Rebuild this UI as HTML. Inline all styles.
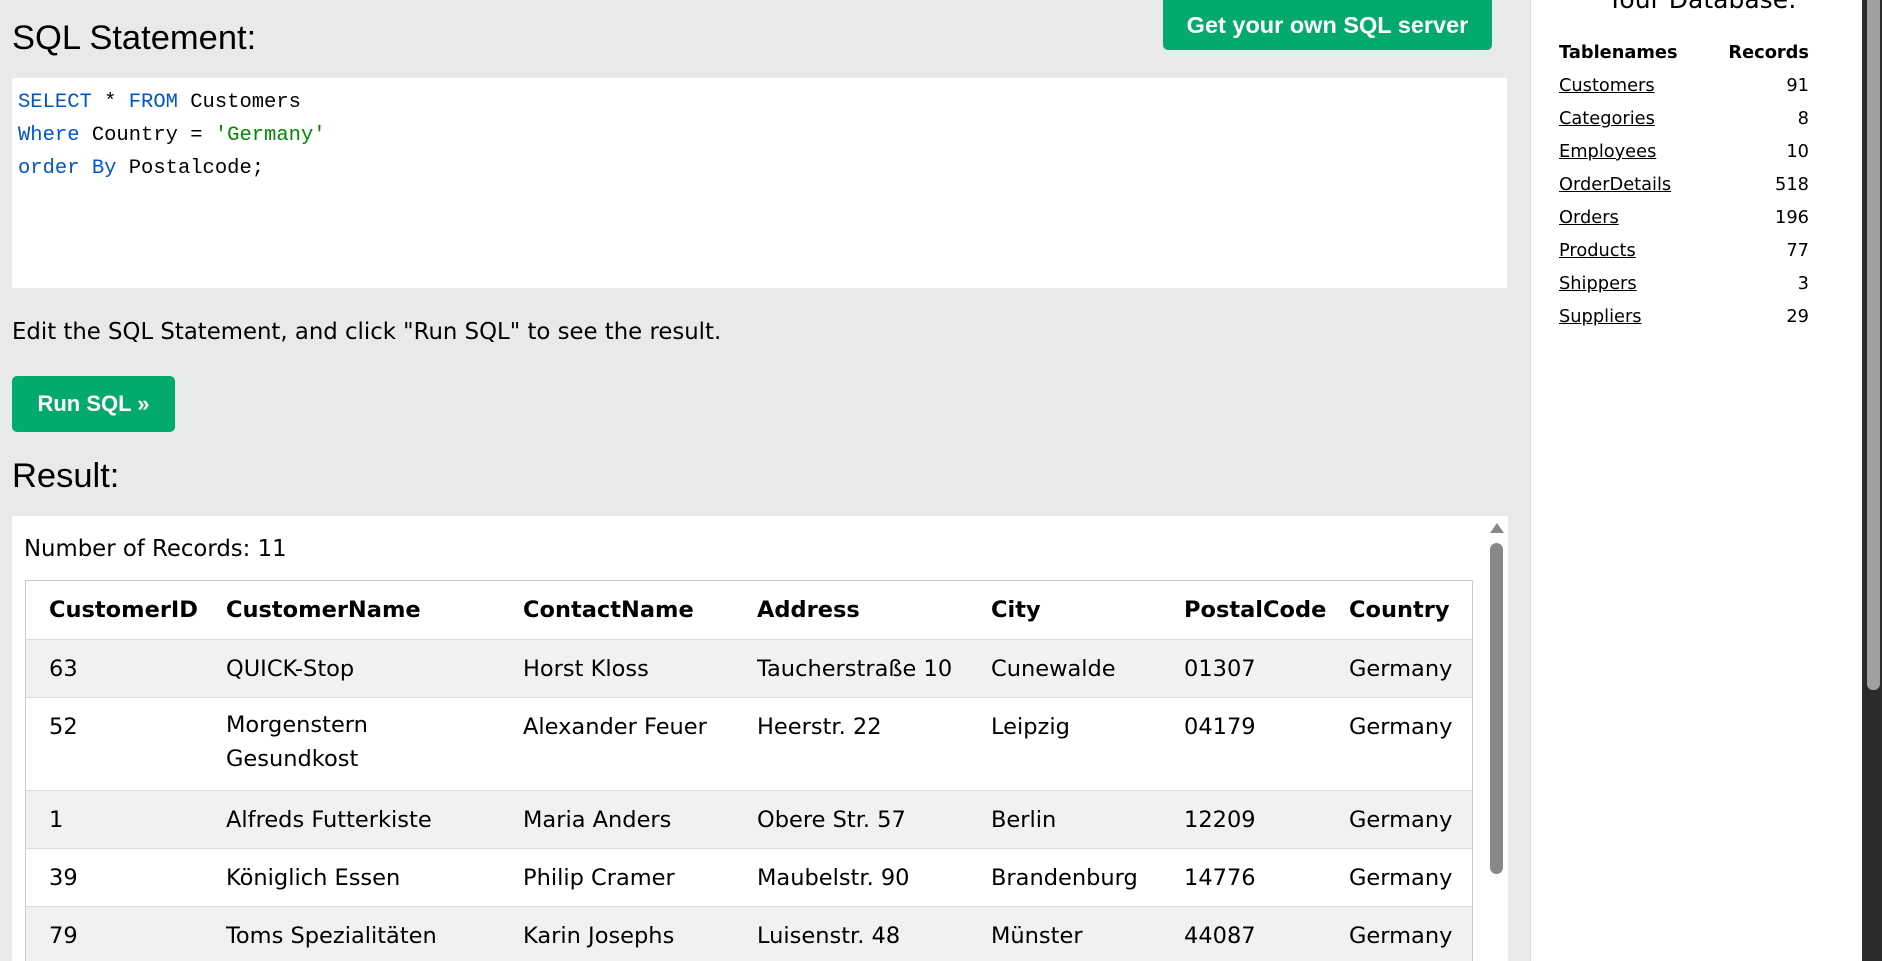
<!DOCTYPE html>
<html><head><meta charset="utf-8"><style>
*{margin:0;padding:0;box-sizing:border-box}
body{width:1882px;height:961px;overflow:hidden;background:#E7E9EB;font-family:"DejaVu Sans","Liberation Sans",sans-serif;color:#000;position:relative}
.a{position:absolute;white-space:nowrap}
h3{position:absolute;font-family:"Liberation Sans",sans-serif;font-weight:normal;font-size:34.5px;left:12px}
.btn{position:absolute;background:#04AA6D;color:#fff;font-family:"Liberation Sans",sans-serif;font-weight:bold;border-radius:5px;display:flex;align-items:center;justify-content:center}
.code{position:absolute;left:12px;top:78px;width:1495px;height:210px;background:#fff;font-family:"Liberation Mono",monospace;font-size:20.5px;line-height:33px;padding:8px 0 0 6px}
.kw{color:#0055cc}.st{color:#008800}
.res{position:absolute;left:12px;top:516px;width:1496px;height:445px;background:#fff;overflow:hidden}
.tb{position:absolute;left:13px;top:64px;width:1448px;border:1px solid #ccc;border-bottom:none}
.row{position:relative;border-bottom:1px solid #ddd;font-size:22.5px}
.row span{position:absolute;top:16px}
.g{background:#f1f1f1}
.side{position:absolute;left:1530px;top:0;width:332px;height:961px;background:#fff;border-left:1px solid #ddd}
.side .r{position:absolute;left:28px;width:250px;font-size:17.8px}
</style></head><body>
<h3 style="top:19px">SQL Statement:</h3>
<div class="btn" style="left:1163px;top:0;width:329px;height:50px;font-size:23.5px;border-radius:0 0 5px 5px">Get your own SQL server</div>
<div class="code">
<div><span class="kw">SELECT</span> * <span class="kw">FROM</span> Customers</div>
<div><span class="kw">Where</span> Country = <span class="st">'Germany'</span></div>
<div><span class="kw">order</span> <span class="kw">By</span> Postalcode;</div>
</div>
<div class="a" style="left:12px;top:319px;font-size:22.8px">Edit the SQL Statement, and click "Run SQL" to see the result.</div>
<div class="btn" style="left:12px;top:376px;width:163px;height:56px;font-size:22px">Run SQL »</div>
<h3 style="top:457px">Result:</h3>
<div class="res">
<div class="a" style="left:12px;top:20px;font-size:22.8px">Number of Records: 11</div>
<div style="position:absolute;left:1478px;top:7px;width:0;height:0;border-left:7px solid transparent;border-right:7px solid transparent;border-bottom:10px solid #888"></div>
<div style="position:absolute;left:1478px;top:27px;width:13px;height:331px;background:#888;border-radius:7px"></div>
<div class="tb">
<div class="row" style="height:59px;font-weight:bold"><span style="left:23px">CustomerID</span><span style="left:200px">CustomerName</span><span style="left:497px">ContactName</span><span style="left:731px">Address</span><span style="left:965px">City</span><span style="left:1158px">PostalCode</span><span style="left:1323px">Country</span></div>
<div class="row g" style="height:58px"><span style="left:23px">63</span><span style="left:200px">QUICK-Stop</span><span style="left:497px">Horst Kloss</span><span style="left:731px">Taucherstraße 10</span><span style="left:965px">Cunewalde</span><span style="left:1158px">01307</span><span style="left:1323px">Germany</span></div>
<div class="row" style="height:93px"><span style="left:23px">52</span><span style="left:200px;line-height:34px;margin-top:-6px">Morgenstern<br>Gesundkost</span><span style="left:497px">Alexander Feuer</span><span style="left:731px">Heerstr. 22</span><span style="left:965px">Leipzig</span><span style="left:1158px">04179</span><span style="left:1323px">Germany</span></div>
<div class="row g" style="height:58px"><span style="left:23px">1</span><span style="left:200px">Alfreds Futterkiste</span><span style="left:497px">Maria Anders</span><span style="left:731px">Obere Str. 57</span><span style="left:965px">Berlin</span><span style="left:1158px">12209</span><span style="left:1323px">Germany</span></div>
<div class="row" style="height:58px"><span style="left:23px">39</span><span style="left:200px">Königlich Essen</span><span style="left:497px">Philip Cramer</span><span style="left:731px">Maubelstr. 90</span><span style="left:965px">Brandenburg</span><span style="left:1158px">14776</span><span style="left:1323px">Germany</span></div>
<div class="row g" style="height:58px"><span style="left:23px">79</span><span style="left:200px">Toms Spezialitäten</span><span style="left:497px">Karin Josephs</span><span style="left:731px">Luisenstr. 48</span><span style="left:965px">Münster</span><span style="left:1158px">44087</span><span style="left:1323px">Germany</span></div>
</div>
</div>
<div class="side">
<div class="a" style="left:40px;width:262px;text-align:center;top:-15px;font-size:25px">Your Database:</div>
<div class="r" style="top:42px;font-weight:bold"><span>Tablenames</span><span style="position:absolute;right:0">Records</span></div>
<div class="r" style="top:75px"><u>Customers</u><span style="position:absolute;right:0">91</span></div>
<div class="r" style="top:108px"><u>Categories</u><span style="position:absolute;right:0">8</span></div>
<div class="r" style="top:141px"><u>Employees</u><span style="position:absolute;right:0">10</span></div>
<div class="r" style="top:174px"><u>OrderDetails</u><span style="position:absolute;right:0">518</span></div>
<div class="r" style="top:207px"><u>Orders</u><span style="position:absolute;right:0">196</span></div>
<div class="r" style="top:240px"><u>Products</u><span style="position:absolute;right:0">77</span></div>
<div class="r" style="top:273px"><u>Shippers</u><span style="position:absolute;right:0">3</span></div>
<div class="r" style="top:306px"><u>Suppliers</u><span style="position:absolute;right:0">29</span></div>
</div>
<div style="position:absolute;left:1862px;top:0;width:20px;height:961px;background:#2b2b2b"></div>
<div style="position:absolute;left:1867px;top:0;width:13px;height:690px;background:#a0a0a0;border-radius:0 0 6px 6px"></div>
</body></html>
